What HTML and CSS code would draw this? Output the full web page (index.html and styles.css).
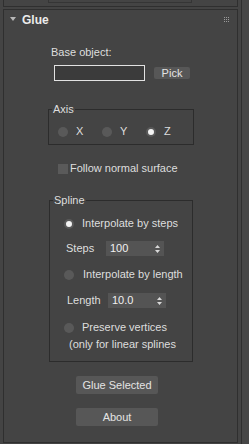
FILE: index.html
```html
<!DOCTYPE html>
<html lang="en">
<head>
  <meta charset="UTF-8">
  <title>Glue</title>
  <link rel="stylesheet" href="styles.css">
</head>
<body>
  <div class="shell">
    <div class="panel">
      <div class="prev"><div class="prev-box"></div></div>

      <div class="rollout">
        <div class="head">
          <span class="arrow"></span>
          <strong>Glue</strong>
          <svg class="grip" width="5" height="5" viewBox="0 0 5 5">
            <rect x="0" y="0" width="1" height="1"/><rect x="2" y="0" width="1" height="1"/><rect x="4" y="0" width="1" height="1"/>
            <rect x="0" y="2" width="1" height="1"/><rect x="2" y="2" width="1" height="1"/><rect x="4" y="2" width="1" height="1"/>
            <rect x="0" y="4" width="1" height="1"/><rect x="2" y="4" width="1" height="1"/><rect x="4" y="4" width="1" height="1"/>
          </svg>
        </div>

        <div class="base-label">Base object:</div>
        <div class="pick-row">
          <div class="text-field"></div>
          <button class="btn pick">Pick</button>
        </div>

        <fieldset class="group axis">
          <legend>Axis</legend>
          <div class="radio-row">
            <label class="axis-item"><span class="radio"></span>X</label>
            <label class="axis-item"><span class="radio"></span>Y</label>
            <label class="axis-item"><span class="radio on"></span>Z</label>
          </div>
        </fieldset>

        <label class="check-row"><span class="check"></span>Follow normal surface</label>

        <fieldset class="group spline">
          <legend>Spline</legend>
          <label class="opt steps-opt"><span class="radio on"></span>Interpolate by steps</label>
          <div class="spin-row steps-row">
            <span class="spin-label">Steps</span>
            <div class="spinner">100<svg class="spin-arrows" width="5" height="8" viewBox="0 0 5 8"><path d="M2.5 0 L5 3 L0 3 Z M0 5 L5 5 L2.5 8 Z"/></svg></div>
          </div>
          <label class="opt length-opt"><span class="radio"></span>Interpolate by length</label>
          <div class="spin-row length-row">
            <span class="spin-label">Length</span>
            <div class="spinner">10.0<svg class="spin-arrows" width="5" height="8" viewBox="0 0 5 8"><path d="M2.5 0 L5 3 L0 3 Z M0 5 L5 5 L2.5 8 Z"/></svg></div>
          </div>
          <label class="opt preserve-opt"><span class="radio"></span>Preserve vertices</label>
          <div class="note">(only for linear splines</div>
        </fieldset>

        <button class="btn wide glue-btn">Glue Selected</button>
        <button class="btn wide about-btn">About</button>
      </div>
    </div>
    <div class="scroll"></div>
  </div>
</body>
</html>
```

FILE: styles.css
```css
body {
  margin: 0;
  background: #444444;
  color: #dedede;
  font-family: "Liberation Sans", Arial, sans-serif;
  font-size: 11px;
  line-height: 13px;
  overflow: hidden;
}
.shell {
  display: flex;
  height: 444px;
}
.panel {
  width: 238px;
}
.scroll {
  width: 7px;
  margin-left: 3px;
  border-left: 1px solid #2f2f2f;
  background: #464646;
}

/* remnant of the rollout above */
.prev {
  margin-left: 3px;
  width: 233px;
  height: 6px;
  border: 1px solid #2f2f2f;
  border-top: none;
}
.prev-box {
  margin-left: 44px;
  width: 142px;
  height: 2px;
  border: 1px solid #353535;
  border-top: none;
}

.rollout {
  box-sizing: border-box;
  margin: 2px 0 0 3px;
  width: 235px;
  height: 434px;
  border: 1px solid #2f2f2f;
}
.head {
  display: flex;
  align-items: center;
  height: 21px;
}
.arrow {
  margin-left: 6px;
  width: 0;
  height: 0;
  border-left: 3px solid transparent;
  border-right: 3px solid transparent;
  border-top: 4px solid #b8b8b8;
  margin-top: -3px;
}
.head strong {
  margin-left: 6px;
  font-size: 12px;
  color: #ececec;
}
.grip {
  margin-left: auto;
  margin-right: 8px;
  margin-top: -3px;
  fill: #9a9a9a;
}

.base-label {
  margin: 15px 0 0 47px;
}
.pick-row {
  display: flex;
  align-items: center;
  margin: 6px 0 0 50px;
}
.text-field {
  box-sizing: border-box;
  width: 91px;
  height: 16px;
  border: 1px solid #e2e2e2;
  background: #3b3b3b;
}
.btn {
  font-family: inherit;
  font-size: 11px;
  line-height: 13px;
  color: #e4e4e4;
  background: #575757;
  border: none;
  border-radius: 2px;
  padding: 0;
}
.pick {
  margin-left: 9px;
  width: 36px;
  height: 12px;
  line-height: 12px;
}

.group {
  margin: 0;
  padding: 0 3px;
  min-width: 0;
  border: 1px solid #2c2c2c;
}
.group legend {
  padding: 0 1px;
  line-height: 13px;
}
.axis {
  box-sizing: border-box;
  margin: 22px 0 0 44px;
  width: 146px;
  padding-bottom: 6px;
}
.radio-row {
  display: flex;
  margin: 9px 0 0 6px;
}
.axis-item {
  display: flex;
  align-items: center;
  gap: 8px;
  width: 45px;
}
.radio {
  box-sizing: border-box;
  flex: none;
  width: 10px;
  height: 10px;
  border-radius: 50%;
  background: #595959;
}
.radio.on {
  border: 2px solid #595959;
  background: #f4f4f4;
}

.check-row {
  display: flex;
  align-items: center;
  gap: 2px;
  margin: 17px 0 0 54px;
}
.check {
  width: 10px;
  height: 10px;
  background: #5a5a5a;
}

.spline {
  box-sizing: border-box;
  margin: 19px 0 0 45px;
  width: 144px;
  padding-bottom: 10px;
}
.opt {
  display: flex;
  align-items: center;
  gap: 8px;
  margin-left: 11px;
}
.steps-opt { margin-top: 10px; }
.length-opt { margin-top: 12px; gap: 9px; }
.preserve-opt { margin-top: 13px; }
.spin-row {
  display: flex;
  align-items: center;
  margin-top: 11px;
}
.length-row { margin-top: 12px; }
.spin-label {
  width: 40px;
  margin-left: 13px;
}
.length-row .spin-label {
  width: 41px;
  margin-left: 14px;
}
.spinner {
  box-sizing: border-box;
  display: flex;
  align-items: center;
  width: 58px;
  height: 15px;
  padding-left: 4px;
  background: #545454;
  color: #f0f0f0;
}
.spin-arrows {
  margin-left: auto;
  margin-right: 4px;
  fill: #d8d8d8;
}
.note {
  margin: 4px 0 0 16px;
  white-space: nowrap;
  overflow: hidden;
  width: 121px;
}

.wide {
  display: block;
  width: 82px;
  height: 18px;
}
.glue-btn { margin: 14px 0 0 72px; }
.about-btn { margin: 14px 0 0 72px; }
```
